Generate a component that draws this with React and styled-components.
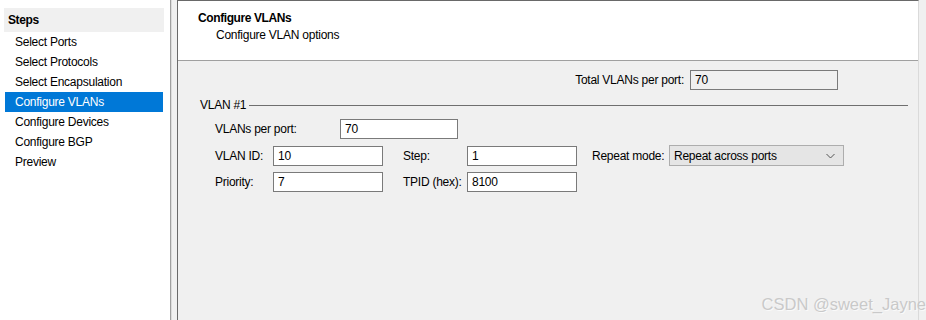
import React from "react";
import styled, { createGlobalStyle } from "styled-components";

const GlobalStyle = createGlobalStyle`
  html, body {
    margin: 0;
    padding: 0;
    background: #f0f0f0;
  }
  body {
    font-family: "Segoe UI", "Liberation Sans", Arial, sans-serif;
    font-size: 12px;
    letter-spacing: -0.25px;
    color: #000;
  }
`;

const Window = styled.div`
  position: relative;
  display: flex;
  width: 926px;
  height: 320px;
  overflow: hidden;
  background: #f0f0f0;
`;

const StepsPanel = styled.div`
  width: 171px;
  flex: none;
  background: #fff;
  border-right: 1px solid #a0a0a0;
  box-shadow: 1px 0 0 #dcdcdc;
  padding: 8px 6px 0 4px;
  box-sizing: border-box;
`;

const StepsHeader = styled.div`
  height: 24px;
  background: #f0f0f0;
  display: flex;
  align-items: center;
  padding-left: 4px;
  font-weight: bold;
  letter-spacing: -0.4px;
`;

const StepItem = styled.div`
  height: 20px;
  display: flex;
  align-items: center;
  margin-left: 1px;
  margin-right: 1px;
  padding-left: 10px;
  background: ${(p) => (p.$active ? "#0078d7" : "transparent")};
  color: ${(p) => (p.$active ? "#fff" : "#000")};
`;

const Gap = styled.div`
  width: 6px;
  flex: none;
`;

const Page = styled.div`
  width: 742px;
  flex: none;
  display: flex;
  flex-direction: column;
  border-left: 1px solid #696969;
  border-top: 1px solid #696969;
  border-right: 1px solid #dadada;
  box-sizing: border-box;
`;

const PageHeader = styled.div`
  height: 60px;
  background: #fff;
  border-bottom: 1px solid #a0a0a0;
  padding: 10px 0 0 20px;
  box-sizing: border-box;
`;

const PageTitle = styled.div`
  font-weight: bold;
  line-height: 15px;
  letter-spacing: -0.4px;
`;

const PageSubtitle = styled.div`
  margin-top: 2px;
  padding-left: 18px;
  line-height: 15px;
`;

const PageBody = styled.div`
  flex: 1;
  background: #f0f0f0;
  padding: 9px 10px 0 22px;
`;

const TotalRow = styled.div`
  display: flex;
  align-items: center;
  justify-content: flex-end;
  gap: 6px;
  padding-right: 70px;
`;

const GroupHeader = styled.div`
  display: flex;
  align-items: center;
  gap: 3px;
  margin-top: 8px;
  height: 14px;
`;

const GroupLine = styled.div`
  flex: 1;
  height: 1px;
  background: #6f6f6f;
`;

const Fields = styled.div`
  display: flex;
  flex-direction: column;
  gap: 6px;
  margin-top: 7px;
  padding-left: 15px;
`;

const Row = styled.div`
  display: flex;
  align-items: center;
`;

const Label = styled.span`
  width: ${(p) => p.$w}px;
  flex: none;
  white-space: nowrap;
`;

const Spacer = styled.div`
  width: ${(p) => p.$w}px;
  flex: none;
`;

const TextBox = styled.div`
  width: ${(p) => p.$w}px;
  height: 20px;
  box-sizing: border-box;
  flex: none;
  border: 1px solid #7a7a7a;
  background: ${(p) => (p.$readOnly ? "#f0f0f0" : "#fff")};
  display: flex;
  align-items: center;
  padding-left: 4px;
`;

const Select = styled.div`
  width: 175px;
  height: 21px;
  box-sizing: border-box;
  flex: none;
  border: 1px solid #adadad;
  background: #e5e5e5;
  display: flex;
  align-items: center;
  justify-content: space-between;
  padding: 0 8px 0 4px;
`;

const Watermark = styled.div`
  position: absolute;
  right: 0;
  bottom: 6px;
  font-family: "Liberation Sans", Arial, sans-serif;
  font-size: 16.5px;
  letter-spacing: 0;
  color: #c9c9c9;
  text-shadow: 1px 1px 0 #fafafa;
  white-space: nowrap;
`;

const Chevron = () => (
  <svg width="9" height="6" viewBox="0 0 9 6">
    <polyline points="0.5,1 4.5,5 8.5,1" fill="none" stroke="#555" strokeWidth="1" />
  </svg>
);

const steps = [
  "Select Ports",
  "Select Protocols",
  "Select Encapsulation",
  "Configure VLANs",
  "Configure Devices",
  "Configure BGP",
  "Preview",
];

const App = () => {
  return (
    <Window>
      <GlobalStyle />
      <StepsPanel>
        <StepsHeader>Steps</StepsHeader>
        {steps.map((s) => (
          <StepItem key={s} $active={s === "Configure VLANs"}>
            {s}
          </StepItem>
        ))}
      </StepsPanel>
      <Gap />
      <Page>
        <PageHeader>
          <PageTitle>Configure VLANs</PageTitle>
          <PageSubtitle>Configure VLAN options</PageSubtitle>
        </PageHeader>
        <PageBody>
          <TotalRow>
            <span>Total VLANs per port:</span>
            <TextBox $w={148} $readOnly>70</TextBox>
          </TotalRow>
          <GroupHeader>
            <span>VLAN #1</span>
            <GroupLine />
          </GroupHeader>
          <Fields>
            <Row>
              <Label $w={125}>VLANs per port:</Label>
              <TextBox $w={118}>70</TextBox>
            </Row>
            <Row>
              <Label $w={58}>VLAN ID:</Label>
              <TextBox $w={110}>10</TextBox>
              <Spacer $w={20} />
              <Label $w={64}>Step:</Label>
              <TextBox $w={110}>1</TextBox>
              <Spacer $w={15} />
              <Label $w={77}>Repeat mode:</Label>
              <Select>
                <span>Repeat across ports</span>
                <Chevron />
              </Select>
            </Row>
            <Row>
              <Label $w={58}>Priority:</Label>
              <TextBox $w={110}>7</TextBox>
              <Spacer $w={20} />
              <Label $w={64}>TPID (hex):</Label>
              <TextBox $w={110}>8100</TextBox>
            </Row>
          </Fields>
        </PageBody>
      </Page>
      <Watermark>CSDN @sweet_Jayne</Watermark>
    </Window>
  );
};

export default App;
